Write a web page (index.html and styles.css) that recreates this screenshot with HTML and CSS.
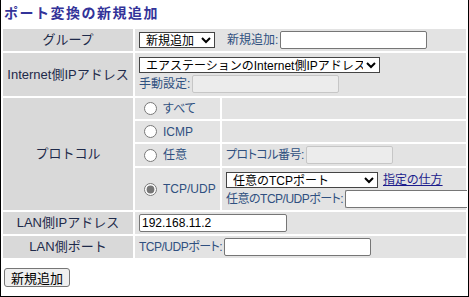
FILE: index.html
```html
<!DOCTYPE html>
<html lang="ja">
<head>
  <meta charset="UTF-8" />
  <title>ポート変換の新規追加</title>
  <link rel="stylesheet" href="styles.css">
</head>
<body>

  <div class="title">ポート変換の新規追加</div>

  <table class="form">
    <colgroup>
      <col class="c-label">
      <col class="c-radio">
      <col>
    </colgroup>
    <tr>
      <th>グループ</th>
      <td colspan="2">
        <div class="line">
          <select class="sel sel-group"><option>新規追加</option></select>
          <span class="after-sel">新規追加:</span>
          <input type="text" class="inp">
        </div>
      </td>
    </tr>
    <tr>
      <th>Internet側IPアドレス</th>
      <td colspan="2">
        <div class="line tall">
          <select class="sel sel-wan"><option>エアステーションのInternet側IPアドレス</option></select>
        </div>
        <div class="line tall2">
          <span>手動設定:</span>
          <input type="text" class="inp" disabled>
        </div>
      </td>
    </tr>
    <tr>
      <th rowspan="4">プロトコル</th>
      <td><div class="line radio-line"><input type="radio" name="proto"><span>すべて</span></div></td>
      <td></td>
    </tr>
    <tr>
      <td><div class="line radio-line"><input type="radio" name="proto"><span>ICMP</span></div></td>
      <td></td>
    </tr>
    <tr>
      <td><div class="line"><input type="radio" name="proto"><span>任意</span></div></td>
      <td>
        <div class="line">
          <span class="tight">プロトコル番号:</span>
          <input type="text" class="inp inp-short" disabled>
        </div>
      </td>
    </tr>
    <tr>
      <td><div class="line"><input type="radio" name="proto" class="picked" checked><span>TCP/UDP</span></div></td>
      <td>
        <div class="line tall">
          <select class="sel sel-port"><option>任意のTCPポート</option></select>
          <a href="#" class="howto">指定の仕方</a>
        </div>
        <div class="line tall">
          <span class="tight">任意のTCP/UDPポート:</span>
          <input type="text" class="inp inp-fill">
        </div>
      </td>
    </tr>
    <tr>
      <th>LAN側IPアドレス</th>
      <td colspan="2">
        <div class="line">
          <input type="text" class="inp inp-ip" value="192.168.11.2">
        </div>
      </td>
    </tr>
    <tr>
      <th>LAN側ポート</th>
      <td colspan="2">
        <div class="line">
          <span class="tight">TCP/UDPポート:</span>
          <input type="text" class="inp">
        </div>
      </td>
    </tr>
  </table>

  <div class="actions">
    <button class="add">新規追加</button>
  </div>

</body>
</html>
```

FILE: styles.css
```css
html {
  background: #fff;
}

body {
  margin: 0;
  height: 297px;
  box-sizing: border-box;
  border: 1px solid #000;
  border-top: none;
  overflow: hidden;
  font-family: 'Liberation Sans', 'Noto Sans CJK JP', sans-serif;
  font-size: 12px;
  line-height: 14px;
}

.title {
  height: 24px;
  padding: 3px 0 0 3px;
  font-size: 14px;
  line-height: 20px;
  font-weight: bold;
  letter-spacing: 1.5px;
  color: #333399;
}

.form {
  width: 100%;
  border-spacing: 2px;
  table-layout: fixed;
}

.c-label {
  width: 130px;
}

.c-radio {
  width: 85px;
}

.form th {
  background: #d9d9d9;
  color: #1e2a4a;
  font-size: 13px;
  font-weight: normal;
  text-align: center;
  padding: 0 2px;
}

.form td {
  background: #e3e3e3;
  color: #2f5080;
  padding: 2px 4px;
  white-space: nowrap;
  font-feature-settings: "palt";
}

.tight {
  letter-spacing: -0.5px;
}

.line {
  display: flex;
  align-items: center;
  height: 18px;
}

.line.tall {
  height: 19px;
}

.line.tall2 {
  height: 20px;
}

.line.radio-line {
  height: 17px;
}

.line input[type="radio"] {
  width: 13px;
  height: 13px;
  margin: 0 6px 0 5px;
}

.line input.picked {
  accent-color: #767676;
}

.sel {
  height: 16px;
  padding: 0 0 0 2px;
  border: 1px solid #444;
  border-radius: 0;
  background: #fff;
  color: #000;
  font-family: 'Liberation Sans', 'Noto Sans CJK JP', sans-serif;
  font-size: 12px;
  font-feature-settings: normal;
}

.sel-group {
  width: 76px;
}

.sel-wan {
  width: 241px;
}

.sel-port {
  width: 152px;
}

.after-sel {
  margin-left: 12px;
}

.inp {
  width: 147px;
  height: 18px;
  box-sizing: border-box;
  margin: 0 0 0 2px;
  padding: 1px 2px;
  border: 1px solid #767676;
  border-radius: 2px;
  background: #fff;
  font-family: 'Liberation Sans', 'Noto Sans CJK JP', sans-serif;
  font-size: 12px;
  color: #000;
}

.inp:disabled {
  background: #ececec;
  border-color: #c6c6c6;
}

.inp-short {
  width: 87px;
}

.inp-ip {
  width: 148px;
  margin-left: 0;
}

/* the last port box runs to the frame edge, as in the original */
.inp-fill {
  flex: 1 1 auto;
  width: auto;
  min-width: 0;
  margin-right: -5px;
  border-right: none;
  border-radius: 2px 0 0 2px;
}

.howto {
  margin-left: 5px;
  color: #1c1c8c;
  text-decoration: underline;
}

.actions {
  padding: 8px 3px 0;
}

button.add {
  height: 19px;
  padding: 0 6px;
  border: 1px solid #767676;
  border-radius: 3px;
  background: #efefef;
  color: #000;
  font-family: 'Noto Sans CJK JP', sans-serif;
  font-size: 13px;
  line-height: 15px;
}
```
